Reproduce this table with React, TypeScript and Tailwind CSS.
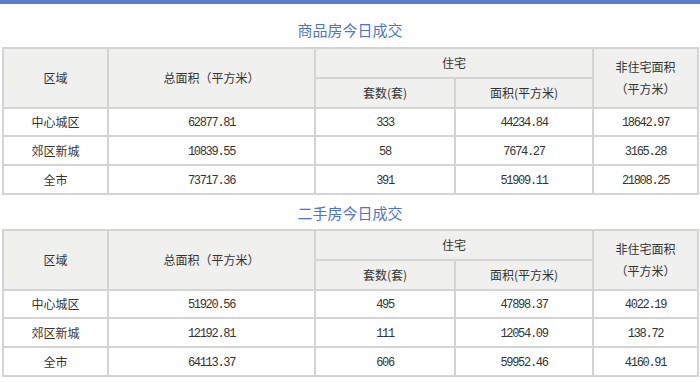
const cjk = { fontFamily: '"Noto Sans CJK SC", "Noto Sans", sans-serif' };

type Row = { area: string; total: string; units: string; resArea: string; nonRes: string };

const newHomes: Row[] = [
  { area: '中心城区', total: '62877.81', units: '333', resArea: '44234.84', nonRes: '18642.97' },
  { area: '郊区新城', total: '10839.55', units: '58', resArea: '7674.27', nonRes: '3165.28' },
  { area: '全市', total: '73717.36', units: '391', resArea: '51909.11', nonRes: '21808.25' },
];

const resale: Row[] = [
  { area: '中心城区', total: '51920.56', units: '495', resArea: '47898.37', nonRes: '4022.19' },
  { area: '郊区新城', total: '12192.81', units: '111', resArea: '12054.09', nonRes: '138.72' },
  { area: '全市', total: '64113.37', units: '606', resArea: '59952.46', nonRes: '4160.91' },
];

function Num({ children }: { children: string }) {
  return (
    <span className="font-['Liberation_Mono',monospace] text-[12px] tracking-[-1.3px]">{children}</span>
  );
}

function DealTable({ rows }: { rows: Row[] }) {
  const cell = 'border-2 border-[#d4d4d4] text-center align-middle p-0';
  const head = `${cell} bg-[#f0f0ef]`;
  return (
    <table className="ml-[2px] w-[695px] border-collapse table-fixed text-[12px] text-[#333]">
      <colgroup>
        <col className="w-[105px]" />
        <col className="w-[207px]" />
        <col className="w-[140px]" />
        <col className="w-[138px]" />
        <col className="w-[105px]" />
      </colgroup>
      <thead>
        <tr className="h-[30px]">
          <th rowSpan={2} className={`${head} font-normal`}>区域</th>
          <th rowSpan={2} className={`${head} font-normal`}>总面积（平方米）</th>
          <th colSpan={2} className={`${head} font-normal`}>住宅</th>
          <th rowSpan={2} className={`${head} font-normal leading-[22px]`}>
            非住宅面积
            <br />
            （平方米）
          </th>
        </tr>
        <tr className="h-[30px]">
          <th className={`${head} font-normal`}>套数(套)</th>
          <th className={`${head} font-normal`}>面积(平方米)</th>
        </tr>
      </thead>
      <tbody>
        {rows.map((r, i) => (
          <tr key={r.area} className={i === 0 ? 'h-[28px]' : 'h-[29px]'}>
            <td className={cell}>{r.area}</td>
            <td className={cell}><Num>{r.total}</Num></td>
            <td className={cell}><Num>{r.units}</Num></td>
            <td className={cell}><Num>{r.resArea}</Num></td>
            <td className={cell}><Num>{r.nonRes}</Num></td>
          </tr>
        ))}
      </tbody>
    </table>
  );
}

export default function App() {
  return (
    <div className="w-[700px] h-[382px] bg-white overflow-hidden" style={cjk}>
      <div className="h-1 bg-[#5b7fc6]" />
      <div className="h-[43px] pt-[16px] text-center text-[15px] leading-[20px] text-[#4f74c4]">
        商品房今日成交
      </div>
      <DealTable rows={newHomes} />
      <div className="h-[34px] pt-[8px] text-center text-[15px] leading-[20px] text-[#4f74c4]">
        二手房今日成交
      </div>
      <DealTable rows={resale} />
    </div>
  );
}
